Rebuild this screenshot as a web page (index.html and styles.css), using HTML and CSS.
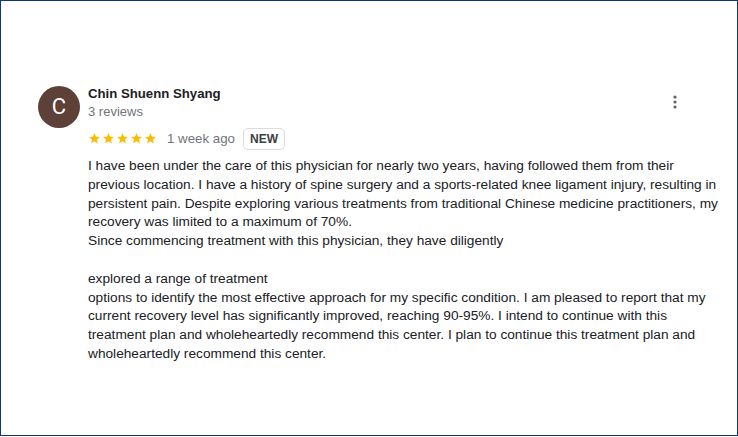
FILE: index.html
```html
<!DOCTYPE html>
<html lang="en">
<head>
<meta charset="utf-8">
<link rel="stylesheet" href="styles.css">
<title>Review</title>
</head>
<body>
<div class="frame">
  <div class="review">
    <div class="avatar">C</div>
    <div class="main">
      <div class="name">Chin Shuenn Shyang</div>
      <div class="count">3 reviews</div>
      <div class="meta">
        <span class="stars">
          <svg viewBox="0 0 24 24"><path d="M12 17.27L18.18 21l-1.64-7.03L22 9.24l-7.19-.61L12 2 9.19 8.63 2 9.24l5.46 4.73L5.82 21z"/></svg><svg viewBox="0 0 24 24"><path d="M12 17.27L18.18 21l-1.64-7.03L22 9.24l-7.19-.61L12 2 9.19 8.63 2 9.24l5.46 4.73L5.82 21z"/></svg><svg viewBox="0 0 24 24"><path d="M12 17.27L18.18 21l-1.64-7.03L22 9.24l-7.19-.61L12 2 9.19 8.63 2 9.24l5.46 4.73L5.82 21z"/></svg><svg viewBox="0 0 24 24"><path d="M12 17.27L18.18 21l-1.64-7.03L22 9.24l-7.19-.61L12 2 9.19 8.63 2 9.24l5.46 4.73L5.82 21z"/></svg><svg viewBox="0 0 24 24"><path d="M12 17.27L18.18 21l-1.64-7.03L22 9.24l-7.19-.61L12 2 9.19 8.63 2 9.24l5.46 4.73L5.82 21z"/></svg>
        </span>
        <span class="ago">1 week ago</span>
        <span class="badge">NEW</span>
      </div>
      <div class="text">I have been under the care of this physician for nearly two years, having followed them from their<br>previous location. I have a history of spine surgery and a sports-related knee ligament injury, resulting in<br>persistent pain. Despite exploring various treatments from traditional Chinese medicine practitioners, my<br>recovery was limited to a maximum of 70%.<br>Since commencing treatment with this physician, they have diligently<br><br>explored a range of treatment<br>options to identify the most effective approach for my specific condition. I am pleased to report that my<br>current recovery level has significantly improved, reaching 90-95%. I intend to continue with this<br>treatment plan and wholeheartedly recommend this center. I plan to continue this treatment plan and<br>wholeheartedly recommend this center.</div>
    </div>
    <button class="menu" aria-label="More options">
      <svg viewBox="0 0 4 14"><circle cx="2" cy="2" r="1.6"/><circle cx="2" cy="7" r="1.6"/><circle cx="2" cy="12" r="1.6"/></svg>
    </button>
  </div>
</div>
</body>
</html>
```

FILE: styles.css
```css
* { box-sizing: border-box; }
html, body { margin: 0; padding: 0; background: #fff; }
body { font-family: "Liberation Sans", Arial, sans-serif; color: #202124; }

.frame {
  width: 738px;
  height: 436px;
  border: 1px solid #0e3778;
  padding: 83px 4px 0 37px;
}

.review {
  position: relative;
  display: flex;
  gap: 8px;
  align-items: flex-start;
}

.avatar {
  flex: none;
  width: 42px;
  height: 42px;
  margin-top: 2px;
  border-radius: 50%;
  background: #5d4037;
  color: #fff;
  font-family: Roboto, "Liberation Sans", sans-serif;
  font-size: 22px;
  line-height: 42px;
  text-align: center;
}

.main { flex: 1; min-width: 0; }

.name {
  font-size: 13.2px;
  font-weight: bold;
  line-height: 19px;
  color: #202124;
}

.count {
  font-size: 13px;
  line-height: 18px;
  color: #70757a;
}

.meta {
  display: flex;
  align-items: center;
  margin-top: 6px;
  height: 23px;
}

.stars { display: flex; gap: 1px; }
.stars svg { width: 13px; height: 13px; fill: #fbbc04; }

.ago {
  margin-left: 10px;
  font-size: 13.3px;
  color: #70757a;
}

.badge {
  margin-left: 8px;
  height: 22px;
  padding: 0 6px;
  border: 1px solid #dadce0;
  border-radius: 5px;
  font-size: 12px;
  font-weight: bold;
  line-height: 20px;
  color: #3c4043;
}

.text {
  margin-top: 7px;
  font-size: 13.7px;
  line-height: 18.8px;
  color: #202124;
}

.menu {
  position: absolute;
  right: 56px;
  top: 11px;
  width: 4px;
  height: 14px;
  padding: 0;
  border: 0;
  background: none;
}
.menu svg { display: block; width: 4px; height: 14px; fill: #5f6368; }
```
